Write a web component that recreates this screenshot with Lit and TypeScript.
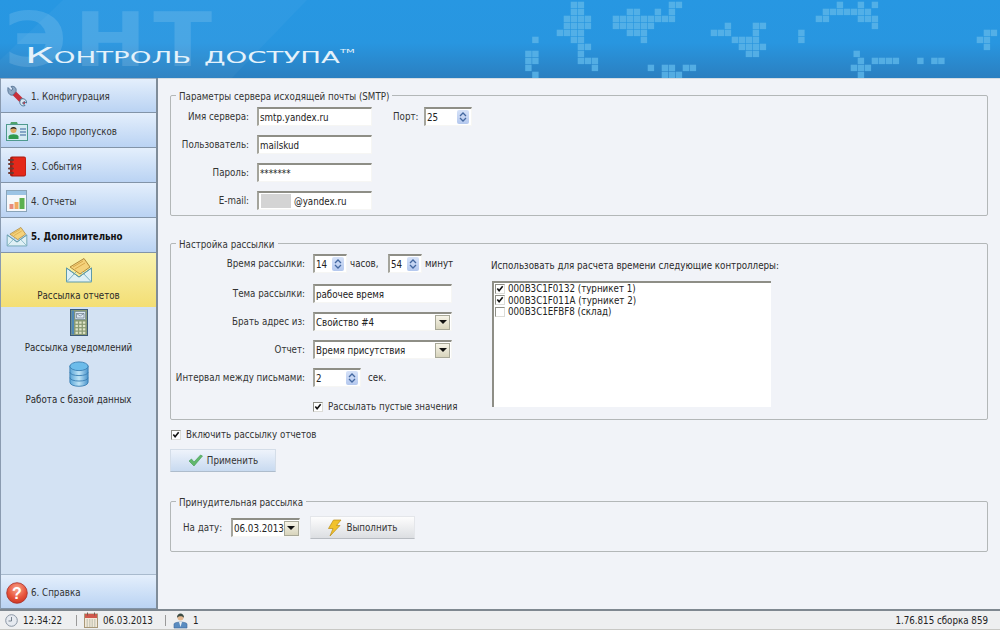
import { LitElement, html, css, svg } from "lit";
import { customElement } from "lit/decorators.js";

const PIXELS: [number, number[]][] = [
  [0, [10, 11, 24, 25, 48, 51, 53]],
  [1, [10, 11, 18, 19, 22, 24, 46, 47, 48, 49, 50, 51, 52]],
  [2, [9, 10, 11, 12, 16, 17, 18, 19, 20, 21, 22, 23, 24, 45, 46, 51, 52, 53]],
  [3, [9, 10, 11, 12, 16, 17, 18, 19, 20, 21, 32, 36, 37, 53]],
  [4, [8, 9, 10, 11, 18, 19, 20, 30, 31, 32, 36, 42.5, 69, 70]],
  [5, [4.5, 10, 11, 20, 33, 34, 35, 36, 42.5, 68, 69]],
  [6, [11, 12, 34, 35, 36, 37, 69]],
  [7, [3.5, 4.5, 11, 35, 36, 50.4]],
  [8, [3.5, 4.5, 11, 12, 13, 51, 53, 54, 55, 56, 59.5, 61.5, 62.5]],
  [9, [3.5, 13, 21, 23, 24, 26, 27, 50, 51, 52]],
  [10, [4.5, 23, 24, 25, 51]],
];

const pixelMap = () => html`<svg class="pixels" width="500" height="78" viewBox="0 0 500 78">
  ${PIXELS.flatMap(([r, cols]) =>
    cols.map((c) => svg`<rect x=${0.7 + 7 * c} y=${1.7 + 7 * r} width="6.4" height="6.4" fill="#5bb4e8" fill-opacity=".85"></rect>`)
  )}
</svg>`;

const envelope = (w = 22, h = 21) => html`<svg width=${w} height=${h} viewBox="0 0 28 26">
  <path d="M1.5 11 14 20 26.5 11V25H1.5Z" fill="#dff0f5" stroke="#5f9aa8"/>
  <path d="M5 10 19 1.5 25 10 15 17Z" fill="#f5d27a" stroke="#b08a3c"/>
  <path d="M8 10 18 4M10 12 20 6" stroke="#d9a94d" fill="none"/>
  <path d="M1.5 25 11 15M26.5 25 17 15" stroke="#7fb3c0" fill="none"/>
  <path d="M1.5 11 14 20 26.5 11" fill="none" stroke="#5f9aa8"/>
</svg>`;

const wrench = () => html`<svg width="22" height="24" viewBox="0 0 22 24">
  <path d="M8 8 17 17" stroke="#c8303a" stroke-width="5" stroke-linecap="round"/>
  <path d="M2 2.5 5 5.5 7 4 5 1.5C8 .5 11 3 10 6.5L7 10C4 11 1 8 2 2.5Z" fill="#8fa9c4" stroke="#4d6a8c" stroke-width=".8"/>
  <path d="M15 14C18 13 21 15 20.5 18L18 16.5 16.5 18 19 20.5C16 22 13 19 14 16Z" fill="#dce8f2" stroke="#4d7a9c" stroke-width="1"/>
</svg>`;

const badge = () => html`<svg width="22" height="20" viewBox="0 0 22 20">
  <path d="M4 3.5 5 1H11L12 3.5Z" fill="#4fa36a"/>
  <rect x=".5" y="3.5" width="21" height="16" fill="#d5eaf2" stroke="#4f9a8e"/>
  <circle cx="7.5" cy="9" r="3" fill="#e0a860"/>
  <path d="M4.3 8.5C4.5 5 10.5 5 10.7 8.5 9 7 6 7 4.3 8.5Z" fill="#222"/>
  <path d="M2.5 18V15.5C3 12.5 12 12.5 12.5 15.5V18Z" fill="#2f9a4f"/>
  <path d="M14 8H20M14 11H20M14 14H20" stroke="#6a8fb8" stroke-width="1.4"/>
</svg>`;

const book = () => html`<svg width="18" height="21" viewBox="0 0 18 21">
  <rect x="2" y=".5" width="16" height="20" rx="2" fill="#a81a10"/>
  <rect x="4.500" y="1.500" width="13" height="18" rx="1" fill="#e4281a"/>
  <path d="M1 4H5M1 8H5M1 12.500H5M1 17H5" stroke="#6e3a32" stroke-width="2" stroke-linecap="round"/>
</svg>`;

const chart = () => html`<svg width="21" height="22" viewBox="0 0 21 22">
  <rect x=".5" y=".5" width="20" height="21" fill="#f6f8fa" stroke="#8aa4b8"/>
  <rect x="1" y="1" width="19" height="4" fill="#9cc4e4"/>
  <rect x="3.500" y="14" width="4" height="5" fill="#e88c7c"/>
  <rect x="8.500" y="12" width="4" height="7" fill="#f0a860"/>
  <rect x="13.500" y="8" width="5" height="11" fill="#5cb050"/>
</svg>`;

const calc = () => html`<svg width="18" height="27" viewBox="0 0 18 27">
  <rect x=".5" y=".5" width="17" height="26" fill="#8a9a74" stroke="#3c5a78"/>
  <rect x="1.500" y="1.500" width="2.500" height="24" fill="#4f88b8"/>
  <rect x="5" y="2.500" width="10.500" height="8" fill="#dbe6f2" stroke="#66808c" stroke-width=".6"/>
  <path d="M6.500 4.500H14V9H6.500ZM6.500 4.500 10.200 7 14 4.500" fill="none" stroke="#6a7a88" stroke-width=".7"/>
  ${[0, 1, 2, 3].flatMap((r) =>
    [0, 1, 2].map((c) => svg`<rect x=${5.5 + c * 3.7} y=${12.5 + r * 3.4} width="2.400" height="2.200" fill="#dfe4c8"></rect>`)
  )}
</svg>`;

const db = () => html`<svg width="20" height="26" viewBox="0 0 22 28">
  <defs>
    <linearGradient id="dbg" x1="0" x2="1" y1="0" y2="0">
      <stop offset="0" stop-color="#5aa6d8"/><stop offset=".5" stop-color="#bfe4f6"/><stop offset="1" stop-color="#4a94cc"/>
    </linearGradient>
  </defs>
  <path d="M1 5V23C1 29 21 29 21 23V5Z" fill="url(#dbg)" stroke="#3c80b4"/>
  <path d="M1 12C1 17 21 17 21 12M1 18C1 23 21 23 21 18" fill="none" stroke="#3c80b4"/>
  <ellipse cx="11" cy="5.500" rx="10" ry="4.800" fill="#6cbcea" stroke="#3c80b4"/>
</svg>`;

const help = () => html`<svg width="22" height="22" viewBox="0 0 22 22">
  <defs>
    <radialGradient id="hg" cx=".5" cy=".3" r=".8">
      <stop offset="0" stop-color="#f8a890"/><stop offset=".55" stop-color="#e8553c"/><stop offset="1" stop-color="#c22c1c"/>
    </radialGradient>
  </defs>
  <circle cx="11" cy="11" r="10.300" fill="url(#hg)" stroke="#a83028" stroke-width=".8"/>
  <text x="11" y="17" text-anchor="middle" font-family="Liberation Sans" font-weight="700" font-size="16" fill="#fff">?</text>
</svg>`;

const clock = () => html`<svg width="13" height="13" viewBox="0 0 13 13">
  <circle cx="6.500" cy="6.500" r="5.800" fill="#e6eaf0" stroke="#8a96a4"/>
  <path d="M6.500 3V7H3.500" fill="none" stroke="#76828e"/>
</svg>`;

const calendar = () => html`<svg width="14" height="16" viewBox="0 0 14 16">
  <rect x=".5" y="2" width="13" height="13.500" fill="#f2e8d8" stroke="#a89878"/>
  <rect x="1" y="2" width="12" height="4" fill="#d0584c"/>
  <path d="M3.500 .5V3.500M10.500 .5V3.500" stroke="#7c5a50"/>
  <path d="M2.500 8H11.500M2.500 10H11.500M2.500 12H11.500M2.500 14H11.500" stroke="#a8b0a0" stroke-dasharray="1.500 1"/>
</svg>`;

const person = () => html`<svg width="15" height="17" viewBox="0 0 15 17">
  <path d="M1 16V12C1 9.500 14 9.500 14 12V16Z" fill="#5a8cc0" stroke="#3c6a9c" stroke-width=".6"/>
  <path d="M6 10H9L7.500 15Z" fill="#e8f0f4"/>
  <circle cx="7.500" cy="5.500" r="3" fill="#e4b890"/>
  <path d="M4 6C3.500 0 11.500 0 11 6 10 3.500 5 3.500 4 6Z" fill="#3c4c44"/>
</svg>`;

const check = () => html`<svg width="15" height="13" viewBox="0 0 15 13">
  <path d="M1 7 3.500 5 6 8 12.500 1 14.500 2 6 12Z" fill="#62b86c" stroke="#3f9a52" stroke-width=".6"/>
</svg>`;

const bolt = () => html`<svg width="15" height="18" viewBox="0 0 15 18">
  <path d="M6.500 1H14L9.500 6.500H13L3 17 6 9.500H1.500Z" fill="#f2c22c" stroke="#b98c18" stroke-width=".7"/>
</svg>`;

const tick = () => html`<svg width="8" height="8" viewBox="0 0 9 9"><path d="M1.500 4 3.500 6.500 7.500 1.500" fill="none" stroke="#111" stroke-width="1.800"/></svg>`;

@customElement("app-root")
export class AppRoot extends LitElement {
  static styles = css`
    :host {
      display: flex;
      flex-direction: column;
      width: 1000px;
      height: 630px;
      overflow: hidden;
      font: 9.700px/13px "DejaVu Sans Condensed", "Liberation Sans", sans-serif;
      color: #2a2a2a;
      background: #f1f3f8;
    }
    .header {
      position: relative;
      height: 78px;
      flex: none;
      background: linear-gradient(#2797e2 0%, #2896e0 55%, #2b7fc0 100%);
    }
    .header::before {
      content: "";
      position: absolute;
      inset: 0;
      background: rgba(255, 255, 255, 0.035);
      clip-path: polygon(63px 0, 307px 0, 232px 78px, 0 78px, 0 60px);
    }
    .pixels { position: absolute; left: 500px; top: 0; }
    .ent {
      position: absolute;
      left: 4px;
      top: 10px;
      font: 700 75px/60px "DejaVu Sans", sans-serif;
      letter-spacing: 6px;
      color: rgba(255, 255, 255, 0.13);
      transform: scaleX(1.15);
      transform-origin: left center;
    }
    .title {
      position: absolute;
      left: 25px;
      top: 43px;
      white-space: nowrap;
      font: 400 22px/26px "DejaVu Sans", sans-serif;
      font-variant: small-caps;
      color: #e4f2fb;
      transform: scaleX(1.84);
      transform-origin: left center;
    }
    .title sup { font-size: 5.500px; line-height: 0; vertical-align: 10px; font-variant: normal; }
    .middle { flex: 1; display: flex; min-height: 0; }
    .side {
      width: 155px;
      flex: none;
      display: flex;
      flex-direction: column;
      background: #d3e2f3;
      border-right: 2px solid #7f8c99;
      border-left: 1px solid #8a9bb0;
    }
    .nav {
      height: 32px;
      padding-top: 2px;
      flex: none;
      display: flex;
      align-items: center;
      border-bottom: 1px solid #8294a8;
      background: linear-gradient(#e4effc, #bad3f3);
      color: #333;
    }
    .nav.first { border-top: 1px solid #9fb2c6; height: 31px; }
    .nav.active { font-weight: 700; color: #111; }
    .nav .ic { width: 30px; display: flex; justify-content: center; align-items: center; flex: none; padding-left: 1px; box-sizing: border-box; }
    .spacer { flex: 1; border-bottom: 1px solid #a8bacd; }
    .nav.last { height: 31px; }
    .item { height: 52px; display: flex; flex-direction: column; align-items: center; padding-top: 1px; box-sizing: border-box; }
    .item .iw { height: 28px; display: flex; align-items: center; justify-content: center; margin-bottom: 5px; }
    .item.sel { height: 54px; padding-top: 3px; background: linear-gradient(#f9f3b0, #f3de74); }
    .main { flex: 1; min-width: 0; padding: 9px 12px 0 12px; border-top: 1px solid #d6dde3; }
    fieldset {
      margin: 0;
      padding: 4px 0 0 0;
      min-width: 0;
      border: 1px solid #b3b7b8;
      border-radius: 2px;
    }
    legend { padding: 2px 3px 0; margin-left: 5px; line-height: 13px; color: #333; }
    .g1 { height: 122px; }
    .g2 { margin-top: 20px; height: 179px; display: flex; padding-top: 3px; }
    .g3 { margin-top: 22px; height: 52px; }
    .row { display: flex; align-items: center; height: 19px; margin-bottom: 9px; }
    .lab { text-align: right; flex: none; white-space: nowrap; color: #333; }
    .g1 .lab { width: 78px; margin-right: 8px; }
    .field {
      box-sizing: border-box;
      height: 19px;
      display: flex;
      align-items: center;
      flex: none;
      background: #fff;
      border-top: 2px solid #8e8e86;
      border-left: 2px solid #a4a49c;
      border-right: 1px solid #f6f6f4;
      border-bottom: 1px solid #f6f6f4;
      padding-left: 1px;
      color: #222;
      white-space: nowrap;
    }
    .grow { flex: 1; }
    .w115 { width: 115px; }
    .w139 { width: 139px; }
    .w34 { width: 34px; }
    .w48 { width: 48px; }
    .w69 { width: 69px; }
    .spin {
      width: 12px;
      height: 14px;
      margin-right: 2px;
      flex: none;
      border-radius: 2px;
      background: linear-gradient(#d6e2f8, #b4c8ee);
      display: flex;
      align-items: center;
      justify-content: center;
    }
    .arrow {
      width: 15px;
      height: 15px;
      margin-right: 1px;
      flex: none;
      box-sizing: border-box;
      border: 1px solid #a8a898;
      background: linear-gradient(#f6f4e8, #d8d4bc);
      display: flex;
      align-items: center;
      justify-content: center;
    }
    .tri { width: 0; height: 0; border: 4px solid transparent; border-top: 4px solid #111; border-bottom: 0; }
    .blur { width: 30px; height: 14px; margin: 0 3px 0 1px; background: #d4d4d4; flex: none; }
    .port { margin-left: 21px; margin-right: 6px; width: 25px; white-space: nowrap; color: #333; }
    .gl { width: 134px; margin-right: 8px; }
    .col { width: 320px; flex: none; }
    .col .row.r1 { margin-bottom: 11px; }
    .col .row.r5 { margin-bottom: 10px; }
    .unit1 { margin: 0 10px 0 3px; width: 28px; white-space: nowrap; }
    .unit2 { margin-left: 3px; white-space: nowrap; }
    .unit3 { margin-left: 7px; white-space: nowrap; }
    .cb {
      width: 10px;
      height: 10px;
      flex: none;
      box-sizing: border-box;
      background: #fff;
      border-top: 1px solid #8e8e86;
      border-left: 1px solid #8e8e86;
      border-right: 1px solid #dcdcd8;
      border-bottom: 1px solid #dcdcd8;
      display: flex;
      align-items: center;
      justify-content: center;
    }
    .cbrow { display: flex; align-items: center; gap: 5px; white-space: nowrap; color: #333; }
    .right { padding-top: 5px; }
    .listbox {
      margin-top: 9px;
      margin-left: 1px;
      box-sizing: border-box;
      width: 279px;
      height: 126px;
      background: #fff;
      border-top: 2px solid #8e8e86;
      border-left: 2px solid #8e8e86;
      padding: 0 0 0 1px;
    }
    .li { display: flex; align-items: center; gap: 3px; height: 11.500px; line-height: 11.500px; white-space: nowrap; color: #222; }
    .en { margin: 8px 0 0 1px; height: 13px; }
    .btn {
      box-sizing: border-box;
      height: 23px;
      display: flex;
      align-items: center;
      justify-content: center;
      gap: 4px;
      color: #333;
      flex: none;
    }
    .apply {
      width: 106px;
      margin-top: 8px;
      background: linear-gradient(#eef3fb, #c8daf0);
      border: 1px solid #d4dde8;
      border-bottom-color: #aebccc;
    }
    .run {
      width: 105px;
      margin-left: 10px;
      background: linear-gradient(#fdfdfd, #dcdee2);
      border: 1px solid #e4e6ea;
      border-bottom-color: #b8bcc2;
    }
    .g3row { display: flex; align-items: center; padding-left: 12px; height: 23px; margin-top: 3px; }
    .g3row .lab { width: 40px; margin-right: 8px; text-align: left; }
    .status {
      flex: none;
      height: 21px;
      box-sizing: border-box;
      display: flex;
      align-items: center;
      border-top: 2px solid #7f8890;
      border-bottom: 1px solid #c8c8c4;
      background: #eeeff0;
      color: #222;
    }
    .st { display: flex; align-items: center; gap: 5px; height: 100%; white-space: nowrap; }
    .sep { width: 1px; height: 11px; background: #9a9a9a; flex: none; }
    .ver { margin-left: auto; padding-right: 12px; }
  `;

  private spin() {
    return html`<span class="grow"></span><span class="spin">
      <svg width="8" height="10" viewBox="0 0 8 10"><path d="M1 4 4 1 7 4M1 6 4 9 7 6" fill="none" stroke="#4468a0" stroke-width="1.300"/></svg>
    </span>`;
  }

  private arrow() {
    return html`<span class="grow"></span><span class="arrow"><span class="tri"></span></span>`;
  }

  render() {
    return html`
      <div class="header">
        ${pixelMap()}
        <div class="ent">ЭНТ</div>
        <div class="title">Контроль доступа<sup>TM</sup></div>
      </div>
      <div class="middle">
        <div class="side">
          <div class="nav first"><span class="ic">${wrench()}</span>1. Конфигурация</div>
          <div class="nav"><span class="ic">${badge()}</span>2. Бюро пропусков</div>
          <div class="nav"><span class="ic">${book()}</span>3. События</div>
          <div class="nav"><span class="ic">${chart()}</span>4. Отчеты</div>
          <div class="nav active"><span class="ic">${envelope()}</span>5. Дополнительно</div>
          <div class="item sel"><span class="iw">${envelope(28, 26)}</span>Рассылка отчетов</div>
          <div class="item"><span class="iw">${calc()}</span>Рассылка уведомлений</div>
          <div class="item"><span class="iw">${db()}</span>Работа с базой данных</div>
          <div class="spacer"></div>
          <div class="nav last"><span class="ic">${help()}</span>6. Справка</div>
        </div>
        <div class="main">
          <fieldset class="g1">
            <legend>Параметры сервера исходящей почты (SMTP)</legend>
            <div class="row">
              <span class="lab">Имя сервера:</span><span class="field w115">smtp.yandex.ru</span>
              <span class="port">Порт:</span><span class="field w48">25${this.spin()}</span>
            </div>
            <div class="row"><span class="lab">Пользователь:</span><span class="field w115">mailskud</span></div>
            <div class="row"><span class="lab">Пароль:</span><span class="field w115">*******</span></div>
            <div class="row"><span class="lab">E-mail:</span><span class="field w115"><span class="blur"></span>@yandex.ru</span></div>
          </fieldset>
          <fieldset class="g2">
            <legend>Настройка рассылки</legend>
            <div class="col">
              <div class="row r1">
                <span class="lab gl">Время рассылки:</span><span class="field w34">14${this.spin()}</span>
                <span class="unit1">часов,</span><span class="field w34">54${this.spin()}</span>
                <span class="unit2">минут</span>
              </div>
              <div class="row"><span class="lab gl">Тема рассылки:</span><span class="field w139">рабочее время</span></div>
              <div class="row"><span class="lab gl">Брать адрес из:</span><span class="field w139">Свойство #4${this.arrow()}</span></div>
              <div class="row"><span class="lab gl">Отчет:</span><span class="field w139">Время присутствия${this.arrow()}</span></div>
              <div class="row r5">
                <span class="lab gl">Интервал между письмами:</span><span class="field w48">2${this.spin()}</span>
                <span class="unit3">сек.</span>
              </div>
              <div class="row">
                <span class="gl"></span>
                <span class="cbrow"><span class="cb">${tick()}</span>Рассылать пустые значения</span>
              </div>
            </div>
            <div class="right">
              <div>Использовать для расчета времени следующие контроллеры:</div>
              <div class="listbox">
                <div class="li"><span class="cb">${tick()}</span>000B3C1F0132 (турникет 1)</div>
                <div class="li"><span class="cb">${tick()}</span>000B3C1F011A (турникет 2)</div>
                <div class="li"><span class="cb"></span>000B3C1EFBF8 (склад)</div>
              </div>
            </div>
          </fieldset>
          <div class="cbrow en"><span class="cb">${tick()}</span>Включить рассылку отчетов</div>
          <div class="btn apply">${check()}Применить</div>
          <fieldset class="g3">
            <legend>Принудительная рассылка</legend>
            <div class="g3row">
              <span class="lab">На дату:</span>
              <span class="field w69">06.03.2013${this.arrow()}</span>
              <div class="btn run">${bolt()}Выполнить</div>
            </div>
          </fieldset>
        </div>
      </div>
      <div class="status">
        <span class="st" style="padding-left:5px;width:71px">${clock()}12:34:22</span>
        <span class="sep"></span>
        <span class="st" style="padding-left:7px;width:81px">${calendar()}06.03.2013</span>
        <span class="sep"></span>
        <span class="st" style="padding-left:7px">${person()}1</span>
        <span class="st ver">1.76.815 сборка 859</span>
      </div>
    `;
  }
}
